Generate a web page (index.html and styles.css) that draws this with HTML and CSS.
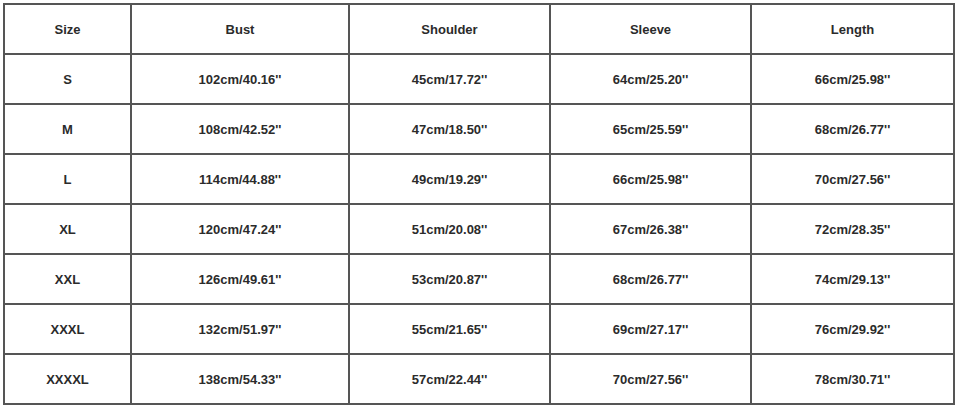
FILE: index.html
```html
<!DOCTYPE html>
<html>
<head>
<meta charset="utf-8">
<link rel="stylesheet" href="styles.css">
</head>
<body>
<table class="size-table">
  <colgroup>
    <col class="c1"><col class="c2"><col class="c3"><col class="c4"><col class="c5">
  </colgroup>
  <tr><td>Size</td><td>Bust</td><td>Shoulder</td><td>Sleeve</td><td>Length</td></tr>
  <tr><td>S</td><td>102cm/40.16''</td><td>45cm/17.72''</td><td>64cm/25.20''</td><td>66cm/25.98''</td></tr>
  <tr><td>M</td><td>108cm/42.52''</td><td>47cm/18.50''</td><td>65cm/25.59''</td><td>68cm/26.77''</td></tr>
  <tr><td>L</td><td>114cm/44.88''</td><td>49cm/19.29''</td><td>66cm/25.98''</td><td>70cm/27.56''</td></tr>
  <tr><td>XL</td><td>120cm/47.24''</td><td>51cm/20.08''</td><td>67cm/26.38''</td><td>72cm/28.35''</td></tr>
  <tr><td>XXL</td><td>126cm/49.61''</td><td>53cm/20.87''</td><td>68cm/26.77''</td><td>74cm/29.13''</td></tr>
  <tr><td>XXXL</td><td>132cm/51.97''</td><td>55cm/21.65''</td><td>69cm/27.17''</td><td>76cm/29.92''</td></tr>
  <tr><td>XXXXL</td><td>138cm/54.33''</td><td>57cm/22.44''</td><td>70cm/27.56''</td><td>78cm/30.71''</td></tr>
</table>
</body>
</html>
```
FILE: styles.css
```css
html, body {
  margin: 0;
  padding: 0;
  background: #ffffff;
}
body {
  padding: 3px 0 0 3px;
  font-family: "Liberation Sans", Arial, sans-serif;
}
.size-table {
  border-collapse: collapse;
  table-layout: fixed;
  width: 950px;
}
.size-table td {
  border: 2px solid #555555;
  height: 48px;
  padding: 0;
  text-align: center;
  vertical-align: middle;
  font-size: 13px;
  font-weight: bold;
  color: #2b2b2b;
}
.c1 { width: 127px; }
.c2 { width: 218px; }
.c3 { width: 201px; }
.c4 { width: 201px; }
.c5 { width: 203px; }
```
